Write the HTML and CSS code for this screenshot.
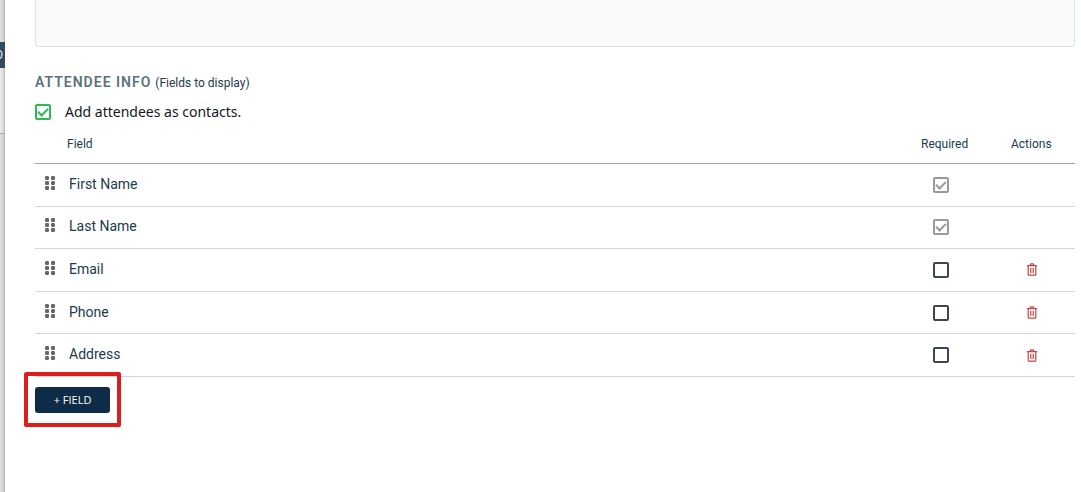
FILE: index.html
```html
<!DOCTYPE html>
<html lang="en">
<head>
<meta charset="utf-8">
<title>Attendee info</title>
<link rel="stylesheet" href="styles.css">
</head>
<body>
<svg class="defs" aria-hidden="true">
  <symbol id="grip" viewBox="0 0 10 14">
    <rect x="0" y="0" width="4" height="4" rx="1.3"/><rect x="6" y="0" width="4" height="4" rx="1.3"/>
    <rect x="0" y="5" width="4" height="4" rx="1.3"/><rect x="6" y="5" width="4" height="4" rx="1.3"/>
    <rect x="0" y="10" width="4" height="4" rx="1.3"/><rect x="6" y="10" width="4" height="4" rx="1.3"/>
  </symbol>
  <symbol id="trash" viewBox="0 0 10 13">
    <path d="M0 2.6h10M3 2.4l.8-1.5h2.4L7 2.4M1.2 3v8.6q0 .6.6.6h6.4q.6 0 .6-.6V3M3.8 4.8v5.2M6.2 4.8v5.2" fill="none" stroke="currentColor" stroke-width="1.2"/>
  </symbol>
</svg>
<div class="layout">
  <aside class="backdrop">
    <div class="backdrop-top"></div>
    <div class="backdrop-tab">O</div>
    <div class="backdrop-mid"></div>
    <div class="backdrop-rest"></div>
  </aside>
  <main class="panel">
    <textarea class="notes" aria-label="Notes"></textarea>
    <header class="section-head">
      <h2 class="title">ATTENDEE INFO</h2>
      <span class="hint">(Fields to display)</span>
    </header>
    <label class="contacts"><input class="check check-green" type="checkbox" checked><span class="contacts-text">Add attendees as contacts.</span></label>
    <table class="fields">
      <thead>
        <tr><th class="grip-col"></th><th class="name-head">Field</th><th class="required-col">Required</th><th class="actions-col">Actions</th></tr>
      </thead>
      <tbody>
        <tr><td class="grip-cell"><svg class="grip"><use href="#grip"/></svg></td><td class="name">First Name</td><td class="required"><input class="check" type="checkbox" aria-label="First Name required" checked disabled></td><td></td></tr>
        <tr><td class="grip-cell"><svg class="grip"><use href="#grip"/></svg></td><td class="name">Last Name</td><td class="required"><input class="check" type="checkbox" aria-label="Last Name required" checked disabled></td><td></td></tr>
        <tr><td class="grip-cell"><svg class="grip"><use href="#grip"/></svg></td><td class="name">Email</td><td class="required"><input class="check" type="checkbox" aria-label="Email required"></td><td class="actions"><button class="delete" aria-label="Delete Email"><svg class="trash"><use href="#trash"/></svg></button></td></tr>
        <tr><td class="grip-cell"><svg class="grip"><use href="#grip"/></svg></td><td class="name">Phone</td><td class="required"><input class="check" type="checkbox" aria-label="Phone required"></td><td class="actions"><button class="delete" aria-label="Delete Phone"><svg class="trash"><use href="#trash"/></svg></button></td></tr>
        <tr><td class="grip-cell"><svg class="grip"><use href="#grip"/></svg></td><td class="name">Address</td><td class="required"><input class="check" type="checkbox" aria-label="Address required"></td><td class="actions"><button class="delete" aria-label="Delete Address"><svg class="trash"><use href="#trash"/></svg></button></td></tr>
      </tbody>
    </table>
    <button class="add-field">+ FIELD</button>
  </main>
</div>
</body>
</html>
```
FILE: styles.css
```css
*, *::before, *::after { box-sizing: border-box; }
body { margin: 0; background: #fff; color: #213b4b; font-family: Roboto, "Liberation Sans", sans-serif; }
.defs { display: none; }
.layout { display: flex; min-height: 100vh; }

.backdrop { display: flex; flex-direction: column; width: 5px; flex: none; overflow: hidden; background: linear-gradient(90deg, #e0e0e0, #d2d2d2 60%, #b4b4b4); }
.backdrop-top { height: 42px; }
.backdrop-tab { display: flex; align-items: center; justify-content: flex-end; height: 26px; padding-right: 2px; background: #34495e; color: #e3e6e9; font-size: 12px; line-height: 26px; }
.backdrop-mid { height: 66px; border-bottom: 1px solid #a9a9a9; background: linear-gradient(90deg, #ececec, #dcdcdc 60%, #bcbcbc); }
.backdrop-rest { flex: 1; }

.panel { flex: 1; padding: 0 6px 0 30px; }
.notes { display: block; width: 100%; height: 47px; padding: 8px; border: 1px solid #d8e4e8; border-top: 0; border-radius: 0 0 3px 3px; background: #f8fbfa; resize: none; }

.section-head { display: flex; align-items: baseline; gap: 4px; margin-top: 25px; line-height: 20px; }
.title { margin: 0; color: #5b717e; font-size: 14px; font-weight: 600; letter-spacing: 1px; }
.hint { font-size: 12px; }
.contacts { display: flex; align-items: center; gap: 14px; height: 20px; margin-top: 9px; color: #16161f; font-family: "Noto Sans", sans-serif; font-size: 14px; }
.contacts-text { padding-bottom: 2px; }

.check { display: block; position: relative; width: 16px; height: 16px; margin: 0; border: 2px solid #3e4656; border-radius: 2px; appearance: none; background: #fff; }
.check-green { color: #2dba55; border-color: currentColor; }
.check:disabled { color: #949ba3; border-color: currentColor; }
.check:checked::after { content: ""; position: absolute; left: 1px; top: 2px; width: 10px; height: 6px; border: solid currentColor; border-width: 0 0 2px 2px; transform: rotate(-45deg); }

.fields { width: 100%; height: 253px; margin-top: 2px; border-collapse: separate; border-spacing: 0; table-layout: fixed; }
.fields th { height: 40px; padding: 0; border-bottom: 1px solid #98a3aa; font-size: 12px; font-weight: 400; text-align: left; }
.fields td { padding: 0; border-bottom: 1px solid #d5d7d9; }
.grip-col { width: 32px; }
.fields .required-col { width: 90px; }
.fields .actions-col { width: 64px; }
.grip { display: block; width: 10px; height: 14px; margin: 0 0 4px 10px; fill: #666; }
.fields .name { padding: 0 0 2px 2px; font-size: 14px; }
.fields .required { padding-left: 12px; }
.fields .actions { padding-left: 16px; }
.delete { display: block; padding: 0; border: 0; background: none; color: #c64548; }
.trash { display: block; width: 10px; height: 13px; }

.add-field { position: relative; display: block; width: 75px; height: 26px; margin-top: 10px; padding: 0 0 2px; border: 0; border-radius: 3px; background: #0e2b47; color: #fff; font-family: "Open Sans", sans-serif; font-size: 11px; font-weight: 500; }
.add-field::before { content: ""; position: absolute; inset: -15px -11px -14px; border: 4px solid #dc1d1b; border-radius: 2px; }
```
